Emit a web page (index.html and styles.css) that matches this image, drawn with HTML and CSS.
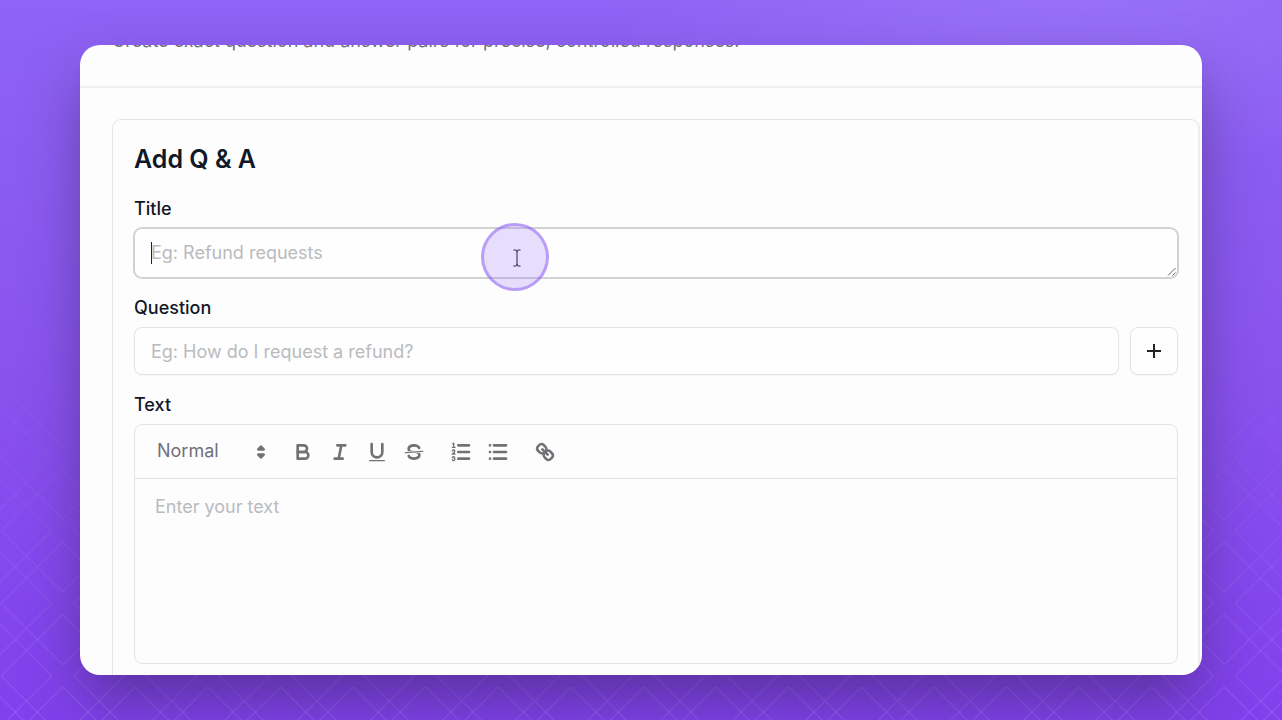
FILE: index.html
```html
<!DOCTYPE html>
<html lang="en">
<head>
<meta charset="utf-8">
<meta name="viewport" content="width=device-width, initial-scale=1">
<title>Add Q &amp; A</title>
<link rel="stylesheet" href="styles.css">
</head>
<body>
<svg class="backdrop" aria-hidden="true">
  <defs>
    <pattern id="diamonds" width="72.6" height="72.6" x="26.4" y="-13.9" patternUnits="userSpaceOnUse">
      <g fill="none" stroke="#b98cff" stroke-width="1">
        <path d="M36.3-25.2 97.8 36.3 36.3 97.8-25.2 36.3Z"/>
        <path d="M-36.3-25.2 25.2 36.3-36.3 97.8-97.8 36.3Z"/>
        <path d="M108.9-25.2 170.4 36.3 108.9 97.8 47.4 36.3Z"/>
        <path d="M36.3-97.8 97.8-36.3 36.3 25.2-25.2-36.3Z"/>
        <path d="M36.3 47.4 97.8 108.9 36.3 170.4-25.2 108.9Z"/>
      </g>
    </pattern>
  </defs>
  <rect width="100%" height="100%" fill="url(#diamonds)"/>
</svg>
<main class="window">
  <header class="page-header">
    <p class="lead">Create exact question and answer pairs for precise, controlled responses.</p>
  </header>
  <form class="panel">
    <h1 class="heading">Add Q &amp; A</h1>

    <div class="field">
      <label class="label" for="title">Title</label>
      <div class="title-box">
        <textarea class="control control-active" id="title" rows="1" placeholder="Eg: Refund requests"></textarea>
        <span class="caret"></span>
        <svg class="grip" viewBox="0 0 10 10" aria-hidden="true"><path d="M1 8.500 8.500 1M5.500 8.500 8.500 5.500"/></svg>
        <span class="pointer">
          <svg class="ibeam" viewBox="0 0 8 18" aria-hidden="true"><path d="M0.500 1H2.500Q4 1 4 2.500Q4 1 5.500 1H7.500M4 2V16M0.500 17H2.500Q4 17 4 15.500Q4 17 5.500 17H7.500"/></svg>
        </span>
      </div>
    </div>

    <div class="field">
      <label class="label" for="question">Question</label>
      <div class="question-row">
        <input class="control" id="question" type="text" placeholder="Eg: How do I request a refund?">
        <button class="add" type="button" aria-label="Add question">
          <svg class="plus" viewBox="0 0 16 16" aria-hidden="true"><path d="M8 1V15M1 8H15"/></svg>
        </button>
      </div>
    </div>

    <div class="field">
      <label class="label" for="text">Text</label>
      <div class="editor">
        <div class="toolbar">
          <div class="picker">
            <select class="format" aria-label="Text style"><option>Normal</option></select>
            <svg class="icon picker-icon" viewBox="0 0 18 18" aria-hidden="true"><path class="solid" d="M7 11 9 13 11 11ZM7 7 9 5 11 7Z"/></svg>
          </div>
          <div class="group">
            <button class="tool" type="button" aria-label="Bold"><svg class="icon" viewBox="0 0 18 18"><path d="M5,4H9.500A2.500,2.500,0,0,1,12,6.500v0A2.500,2.500,0,0,1,9.500,9H5V4Z"/><path d="M5,9h5.500A2.500,2.500,0,0,1,13,11.500v0A2.500,2.500,0,0,1,10.500,14H5V9Z"/></svg></button>
            <button class="tool" type="button" aria-label="Italic"><svg class="icon" viewBox="0 0 18 18"><path d="M7 4H13M5 14H11M8 14 10 4"/></svg></button>
            <button class="tool" type="button" aria-label="Underline"><svg class="icon" viewBox="0 0 18 18"><path d="M5,3V9a4.012,4.012,0,0,0,4,4H9a4.012,4.012,0,0,0,4-4V3"/><rect class="fill" x="3" y="15" width="12" height="1" rx=".5"/></svg></button>
            <button class="tool" type="button" aria-label="Strikethrough"><svg class="icon" viewBox="0 0 18 18"><path class="thin" d="M15.500 8.500 2.500 9.500"/><path class="fill" d="M9.007,8C6.542,7.791,6,7.519,6,6.500,6,5.792,7.283,5,9,5c1.571,0,2.765.679,2.969,1.309a1,1,0,0,0,1.900-.617C13.356,4.106,11.354,3,9,3,6.200,3,4,4.538,4,6.500a3.200,3.200,0,0,0,.5,1.843Z"/><path class="fill" d="M8.984,10C11.457,10.208,12,10.479,12,11.500c0,0.708-1.283,1.500-3,1.500-1.571,0-2.765-.679-2.969-1.309a1,1,0,1,0-1.900.617C4.644,13.894,6.646,15,9,15c2.800,0,5-1.538,5-3.500a3.200,3.200,0,0,0-.5-1.843Z"/></svg></button>
          </div>
          <div class="group">
            <button class="tool" type="button" aria-label="Numbered list"><svg class="icon" viewBox="0 0 18 18"><path d="M7 4H15M7 9H15M7 14H15"/><path class="thin" d="M2.500 5.500H4.500"/><path class="fill" d="M3.500,6A0.500,0.500,0,0,1,3,5.500V3.085l-0.276.138A0.500,0.500,0,0,1,2.053,3c-0.124-.247-0.023-0.324.224-0.447l1-.5A0.500,0.500,0,0,1,4,2.500v3A0.500,0.500,0,0,1,3.500,6Z"/><path class="thin" d="M4.500,10.500h-2c0-.234,1.850-1.076,1.850-2.234A0.959,0.959,0,0,0,2.500,8.156"/><path class="thin" d="M2.500,14.846a0.959,0.959,0,0,0,1.850-.109A0.700,0.700,0,0,0,3.750,14a0.688,0.688,0,0,0,.6-0.736,0.959,0.959,0,0,0-1.850-.109"/></svg></button>
            <button class="tool" type="button" aria-label="Bulleted list"><svg class="icon" viewBox="0 0 18 18"><path d="M6 4H15M6 9H15M6 14H15M3 4H3M3 9H3M3 14H3"/></svg></button>
          </div>
          <div class="group">
            <button class="tool" type="button" aria-label="Link"><svg class="icon" viewBox="0 0 18 18"><path d="M7 7 11 11"/><path d="M8.900,4.577a3.476,3.476,0,0,1,.36,4.679A3.476,3.476,0,0,1,4.577,8.900C3.185,7.500,2.035,6.400,4.217,4.217S7.500,3.185,8.900,4.577Z"/><path d="M13.423,9.100a3.476,3.476,0,0,0-4.679-.36,3.476,3.476,0,0,0,.36,4.679c1.392,1.392,2.500,2.542,4.679.36S14.815,10.500,13.423,9.100Z"/></svg></button>
          </div>
        </div>
        <textarea class="editor-text" id="text" placeholder="Enter your text"></textarea>
      </div>
    </div>
  </form>
</main>
</body>
</html>
```

FILE: styles.css
```css
*, *::before, *::after { box-sizing: border-box; }

body {
  margin: 0;
  height: 100vh;
  padding: 45px 80px;
  display: flex;
  overflow: hidden;
  font-family: Inter, "Liberation Sans", sans-serif;
  font-optical-sizing: none;
  color: #111827;
  background:
    radial-gradient(ellipse 36% 24% at 83% 0, rgba(166, 133, 250, .4), transparent),
    linear-gradient(180deg, #8e63f5 0%, #8a55ee 45%, #8140ec 100%);
}

.backdrop {
  position: absolute;
  inset: 0;
  width: 100%;
  height: 100%;
  opacity: .35;
  -webkit-mask-image: linear-gradient(180deg, transparent 40%, #000 100%);
  mask-image: linear-gradient(180deg, transparent 40%, #000 100%);
}

.window {
  position: relative;
  flex: 1;
  min-width: 0;
  overflow: hidden;
  border-radius: 20px;
  background: #fdfdfd;
  box-shadow: 0 28px 56px -4px rgba(50, 35, 80, .5);
}

.page-header {
  display: flow-root;
  height: 43px;
  padding: 0 32px;
  border-bottom: 2px solid #efefef;
}

.lead {
  margin: -18px 0 0;
  font-size: 18px;
  line-height: 28px;
  color: #71717a;
  white-space: nowrap;
}

.panel {
  margin: 31px 2px 0 32px;
  padding: 19px 20px 40px 21px;
  border: 1px solid #e4e4e7;
  border-right: 2px solid #ededee;
  border-radius: 9px;
}

.heading {
  margin: 0 0 18px;
  font-size: 25px;
  line-height: 40px;
  font-weight: 600;
}

.field { margin-bottom: 18px; }

.label {
  display: block;
  margin-bottom: 7px;
  font-size: 18px;
  line-height: 24px;
  font-weight: 500;
}

.title-box {
  position: relative;
  display: flex;
}

.control {
  flex: 1;
  min-width: 0;
  height: 48px;
  margin: 0;
  padding: 0 16px;
  font: inherit;
  font-size: 18px;
  line-height: 28px;
  color: inherit;
  background: #fefefe;
  border: 1px solid #e4e4e7;
  border-radius: 8px;
  box-shadow: 0 1px 2px rgba(0, 0, 0, .04);
  outline: none;
}

.control-active {
  height: 50px;
  padding: 10px 16px;
  border-color: #d2d2d2;
  box-shadow: 0 0 0 1px #d2d2d2;
  resize: none;
  overflow: hidden;
}

.control::placeholder,
.editor-text::placeholder { color: #b9bbbd; opacity: 1; }

.caret {
  position: absolute;
  left: 17px;
  top: 14px;
  width: 1px;
  height: 22px;
  background: #222;
}

.grip {
  position: absolute;
  right: 1px;
  bottom: 1px;
  width: 10px;
  height: 10px;
  fill: none;
  stroke: #666;
  stroke-width: 1;
}

.pointer {
  position: absolute;
  left: 347px;
  top: -5px;
  width: 68px;
  height: 68px;
  border: 3px solid rgba(139, 92, 246, .5);
  border-radius: 50%;
  background: rgba(139, 92, 246, .2);
  display: flex;
  align-items: center;
  justify-content: center;
  padding: 2px 0 0 4px;
}

.ibeam {
  width: 8px;
  height: 18px;
  fill: none;
  stroke: #2b2140;
  stroke-width: 1;
}

.question-row {
  display: flex;
  gap: 11px;
}

.add {
  width: 48px;
  height: 48px;
  padding: 0;
  display: flex;
  align-items: center;
  justify-content: center;
  background: #fefefe;
  border: 1px solid #e4e4e7;
  border-radius: 8px;
  box-shadow: 0 1px 2px rgba(0, 0, 0, .04);
}

.plus {
  width: 16px;
  height: 16px;
  fill: none;
  stroke: #222;
  stroke-width: 2;
}

.editor {
  border: 1px solid #e4e4e7;
  border-radius: 8px;
  overflow: hidden;
}

.toolbar {
  height: 54px;
  padding: 0 10px;
  display: flex;
  align-items: center;
  gap: 10px;
  border-bottom: 1px solid #e0e0e2;
}

.picker {
  position: relative;
  width: 129px;
}

.format {
  display: block;
  width: 100%;
  height: 32px;
  padding: 0 12px 2px;
  appearance: none;
  border: 0;
  background: transparent;
  font: inherit;
  font-size: 18px;
  font-optical-sizing: auto;
  color: #71717a;
}

.picker-icon {
  position: absolute;
  right: 1px;
  top: 4px;
  pointer-events: none;
}

.group { display: flex; }

.tool {
  width: 37px;
  height: 32px;
  padding: 0;
  display: flex;
  align-items: center;
  justify-content: center;
  border: 0;
  background: none;
}

.icon {
  width: 24px;
  height: 24px;
  fill: none;
  stroke: #717276;
  stroke-width: 2;
  stroke-linecap: round;
  stroke-linejoin: round;
}

.icon .thin { stroke-width: 1; }
.icon .fill { fill: #717276; stroke: none; }
.icon .solid { fill: #717276; }

.editor-text {
  display: block;
  width: 100%;
  height: 184px;
  padding: 14px 20px;
  border: 0;
  outline: none;
  resize: none;
  background: transparent;
  font: inherit;
  font-size: 18px;
  line-height: 28px;
  color: inherit;
}
```
